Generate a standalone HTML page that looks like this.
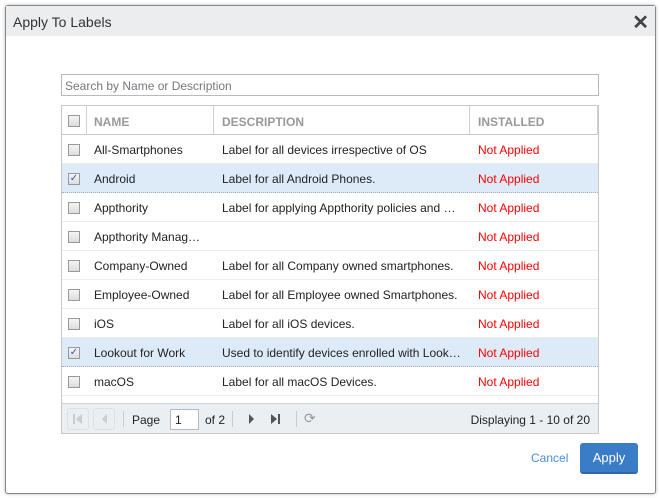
<!DOCTYPE html>
<html><head><style>
*{box-sizing:border-box;margin:0;padding:0}
body{width:660px;height:498px;background:#fff;font-family:"Liberation Sans",sans-serif;font-size:12px;color:#222;position:relative;overflow:hidden}
.dlg{position:absolute;left:5px;top:5px;width:651px;height:489px;border:1px solid #888;border-radius:3px;background:#fff;box-shadow:0 0 3px rgba(0,0,0,.3)}
.hd{position:absolute;left:0;top:0;right:0;height:30px;background:#ecedef}
.hd span{position:absolute;left:7px;top:8px;font-size:14px;color:#333}
.x{position:absolute;right:6px;top:4px;font-size:20px;font-weight:bold;color:#444}
.search{position:absolute;left:61px;top:74px;width:538px;height:22px;border:1px solid #b5b8c8;color:#777;font-size:12px;padding:4px 3px}
.grid{position:absolute;left:61px;top:105px;width:538px;height:329px;border:1px solid #c8c8c8}
.row{position:absolute;left:0;width:536px;height:29px;border-bottom:1px solid #ededed}
.row.sel{background:#ddebf8;border-bottom:1px dotted #aab}
.c{position:absolute;top:8px;white-space:nowrap}
.cb{position:absolute;left:6px;top:9px;width:12px;height:12px;border:1px solid #999;background:linear-gradient(#f4f4f4,#ddd)}
.hr{top:0;height:29px;border-bottom:1px solid #c8c8c8}
.hr .c{font-weight:bold;color:#999;top:9px}
.vl{position:absolute;top:0;height:29px;width:1px;background:#d0d0d0}
.red{color:#f00}
.tb{position:absolute;left:0;top:297px;width:536px;height:30px;background:#eceff2;border-top:1px solid #d0d0d0}
.tb .t{position:absolute;top:9px}
.box{position:absolute;top:4px;width:22px;height:22px;border:1px solid #dde0e4;border-radius:3px}
.sep{position:absolute;top:7px;width:1px;height:16px;background:#ccc}
.btn{position:absolute;left:580px;top:443px;width:58px;height:31px;background:#3a7cc5;border-radius:3px;color:#fff;font-size:13px;text-align:center;line-height:30px;border-bottom:2px solid #2f67a8}
</style></head><body>
<div class="dlg"><div class="hd"><span>Apply To Labels</span><div class="x">✕</div></div></div>
<div class="search">Search by Name or Description</div>
<div class="grid">
<div class="row hr"><div class="cb"></div><div class="vl" style="left:24px"></div><div class="c" style="left:32px">NAME</div><div class="vl" style="left:151px"></div><div class="c" style="left:160px">DESCRIPTION</div><div class="vl" style="left:407px"></div><div class="c" style="left:416px">INSTALLED</div><div class="vl" style="left:535px"></div></div>
<div class="row" style="top:29px"><div class="cb"></div><div class="c" style="left:32px">All-Smartphones</div><div class="c" style="left:160px">Label for all devices irrespective of OS</div><div class="c red" style="left:416px">Not Applied</div></div>
<div class="row sel" style="top:58px"><div class="cb" style="color:#35c;font-size:10px;line-height:10px;text-align:center">✓</div><div class="c" style="left:32px">Android</div><div class="c" style="left:160px">Label for all Android Phones.</div><div class="c red" style="left:416px">Not Applied</div></div>
<div class="row" style="top:87px"><div class="cb"></div><div class="c" style="left:32px">Appthority</div><div class="c" style="left:160px">Label for applying Appthority policies and …</div><div class="c red" style="left:416px">Not Applied</div></div>
<div class="row" style="top:116px"><div class="cb"></div><div class="c" style="left:32px">Appthority Manag…</div><div class="c red" style="left:416px">Not Applied</div></div>
<div class="row" style="top:145px"><div class="cb"></div><div class="c" style="left:32px">Company-Owned</div><div class="c" style="left:160px">Label for all Company owned smartphones.</div><div class="c red" style="left:416px">Not Applied</div></div>
<div class="row" style="top:174px"><div class="cb"></div><div class="c" style="left:32px">Employee-Owned</div><div class="c" style="left:160px">Label for all Employee owned Smartphones.</div><div class="c red" style="left:416px">Not Applied</div></div>
<div class="row" style="top:203px"><div class="cb"></div><div class="c" style="left:32px">iOS</div><div class="c" style="left:160px">Label for all iOS devices.</div><div class="c red" style="left:416px">Not Applied</div></div>
<div class="row sel" style="top:232px"><div class="cb" style="color:#35c;font-size:10px;line-height:10px;text-align:center">✓</div><div class="c" style="left:32px">Lookout for Work</div><div class="c" style="left:160px">Used to identify devices enrolled with Look…</div><div class="c red" style="left:416px">Not Applied</div></div>
<div class="row" style="top:261px"><div class="cb"></div><div class="c" style="left:32px">macOS</div><div class="c" style="left:160px">Label for all macOS Devices.</div><div class="c red" style="left:416px">Not Applied</div></div>
<div class="tb">
<div class="box" style="left:5px"></div><div class="box" style="left:31px"></div>
<svg style="position:absolute;left:10px;top:9px" width="12" height="12"><rect x="1" y="1" width="2" height="10" fill="#ccc"/><path d="M10 1L4 6L10 11Z" fill="#ccc"/></svg>
<svg style="position:absolute;left:37px;top:9px" width="12" height="12"><path d="M8 1L3 6L8 11Z" fill="#ccc"/></svg>
<div class="sep" style="left:61px"></div>
<div class="t" style="left:70px">Page</div><div style="position:absolute;left:108px;top:5px;width:29px;height:21px;border:1px solid #b5b8c8;background:#fff;padding:3px 4px">1</div>
<div class="t" style="left:143px">of 2</div><div class="sep" style="left:170px"></div>
<svg style="position:absolute;left:184px;top:9px" width="12" height="12"><path d="M3 1L8 6L3 11Z" fill="#555"/></svg>
<svg style="position:absolute;left:208px;top:9px" width="12" height="12"><path d="M1 1L7 6L1 11Z" fill="#555"/><rect x="8" y="1" width="2" height="10" fill="#555"/></svg>
<div class="sep" style="left:234px"></div>
<div class="t" style="left:242px;color:#999;font-size:14px;top:6px">⟳</div>
<div class="t" style="right:8px">Displaying 1 - 10 of 20</div>
</div>
</div>
<div style="position:absolute;left:531px;top:451px;color:#4a90d9;font-size:12px">Cancel</div>
<div class="btn">Apply</div>
</body></html>
